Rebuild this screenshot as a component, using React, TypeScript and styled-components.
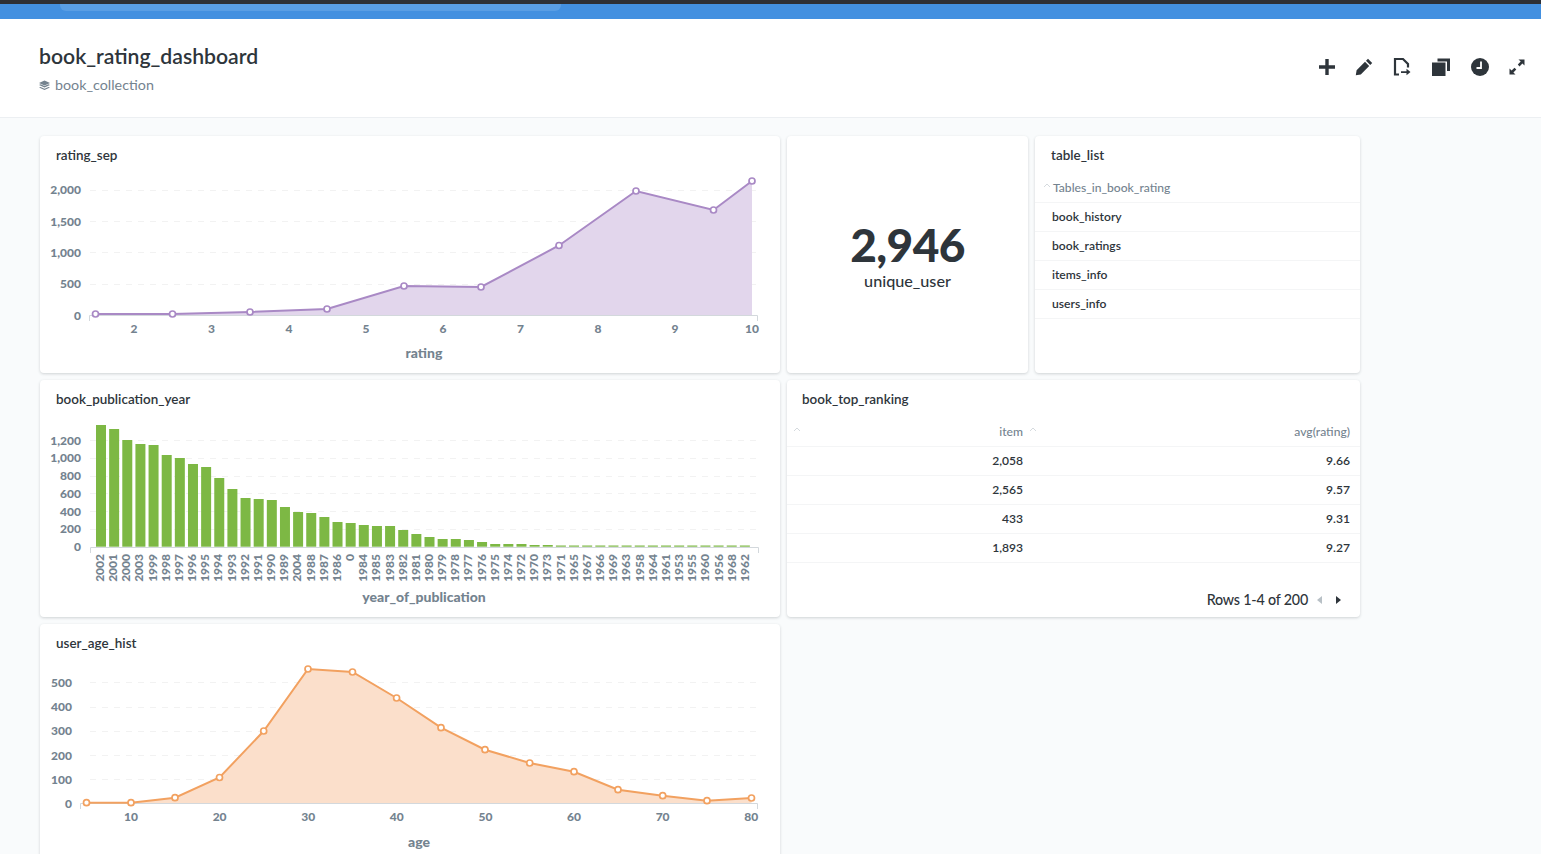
import React from 'react';
import styled, { createGlobalStyle } from 'styled-components';

const Global = createGlobalStyle`
  html, body { margin: 0; padding: 0; height: 100%; overflow: hidden; background: #f9fbfc; }
  body { font-family: Lato, "Noto Sans", sans-serif; color: #2e353b; }
`;

const Page = styled.div`
  width: 1541px;
  height: 854px;
  overflow: hidden;
  display: flex;
  flex-direction: column;
`;
const WindowEdge = styled.div`
  height: 4px;
  flex: none;
  background: #2e3035;
`;
const NavBar = styled.div`
  height: 15px;
  flex: none;
  background: #4390e0;
  padding-left: 60px;
`;
const NavSearch = styled.div`
  width: 501px;
  height: 7px;
  background: #5a9ee4;
  border-radius: 0 0 6px 6px;
`;
const Header = styled.header`
  height: 99px;
  flex: none;
  box-sizing: border-box;
  background: #fff;
  border-bottom: 1px solid #eceff2;
  padding: 23px 6px 0 39px;
  display: flex;
  justify-content: space-between;
  align-items: flex-start;
`;
const TitleBlock = styled.div`
  display: flex;
  flex-direction: column;
  gap: 5px;
`;
const Title = styled.h1`
  margin: 0;
  font-size: 21.2px;
  line-height: 28px;
  font-weight: 600;
  color: #2e353b;
`;
const Collection = styled.div`
  display: flex;
  align-items: center;
  gap: 5px;
  font-size: 14.3px;
  line-height: 20px;
  font-weight: 400;
  color: #74838f;
`;
const Actions = styled.div`
  display: flex;
  align-items: center;
  margin-top: 15px;
`;
const ActionSlot = styled.div<{ $w: number }>`
  width: ${p => p.$w}px;
  height: 20px;
  display: flex;
  justify-content: center;
  align-items: center;
`;
const Board = styled.main`
  flex: none;
  padding: 18px 0 0 40px;
  display: grid;
  grid-template-columns: 740px 241px 325px;
  grid-auto-rows: 237px;
  gap: 7px;
`;
const Card = styled.section<{ $span?: number }>`
  grid-column: span ${p => p.$span ?? 1};
  background: #fff;
  border-radius: 4px;
  box-shadow: 0 1px 3px rgba(46, 53, 59, 0.2);
  display: flex;
  flex-direction: column;
  overflow: hidden;
`;
const CardTitle = styled.h2`
  margin: 0;
  height: 38px;
  flex: none;
  box-sizing: border-box;
  padding: 11px 16px 0;
  font-size: 13.45px;
  line-height: 17px;
  font-weight: 600;
  color: #2e353b;
`;
const TableTitle = styled(CardTitle)`
  padding-left: 15px;
`;
const ChartSvg = styled.svg`
  display: block;
  flex: none;
  width: 740px;
  height: 199px;
  font-family: Lato, sans-serif;
`;
const TickText = styled.text`
  font-size: 12px;
  font-weight: 900;
  fill: #74838f;
`;
const AxisTitle = styled.text`
  font-size: 14px;
  font-weight: 900;
  fill: #74838f;
  text-anchor: middle;
`;
const MetricCard = styled(Card)`
  align-items: center;
  justify-content: center;
  padding-top: 1px;
  box-sizing: border-box;
`;
const MetricValue = styled.div`
  font-size: 46px;
  line-height: 52px;
  font-weight: 900;
  color: #2e353b;
  letter-spacing: -0.6px;
`;
const MetricLabel = styled.div`
  font-size: 16.2px;
  line-height: 20px;
  font-weight: 500;
  color: #2e353b;
`;
const Row = styled.div<{ $head?: boolean }>`
  height: 29px;
  box-sizing: border-box;
  flex: none;
  display: flex;
  align-items: center;
  border-bottom: 1px solid #f4f5f6;
  padding-bottom: ${p => (p.$head ? 2 : 1)}px;
  font-size: ${p => (p.$head ? 12.1 : 12.1)}px;
  font-weight: ${p => (p.$head ? 500 : 600)};
  color: ${p => (p.$head ? '#74838f' : '#2e353b')};
`;
const ListHead = styled(Row)`
  padding-left: 8px;
`;
const ListRow = styled(Row)`
  padding-left: 17px;
`;
const LeftCell = styled.div`
  width: 236px;
  flex: none;
  display: flex;
  justify-content: flex-end;
  align-items: center;
`;
const RightCell = styled.div`
  flex: 1;
  text-align: right;
  padding-right: 10px;
`;
const HeadLeft = styled.div`
  width: 236px;
  flex: none;
  display: flex;
  justify-content: space-between;
  align-items: center;
  padding-left: 6px;
  box-sizing: border-box;
`;
const ItemSort = styled.div`
  width: 8px;
  flex: none;
  margin-left: 6px;
  display: flex;
`;
const ChevronMark = styled.svg<{ $gap?: number }>`
  flex: none;
  margin-right: ${p => p.$gap ?? 0}px;
  margin-bottom: 3px;
`;
const Pager = styled.div`
  margin-top: 27px;
  display: flex;
  justify-content: flex-end;
  align-items: center;
  padding-right: 19px;
  font-size: 14.3px;
  line-height: 20px;
  font-weight: 500;
  color: #2e353b;
  letter-spacing: -0.2px;
`;
const PagerIcons = styled.div`
  display: flex;
  align-items: center;
  gap: 14px;
  margin-left: 9px;
`;

const Chevron = ({ gap = 0 }: { gap?: number }) => (
  <ChevronMark $gap={gap} width="8" height="5" viewBox="0 0 8 5">
    <path d="M1 4 L4 1 L7 4" fill="none" stroke="#d5dade" strokeWidth="1" />
  </ChevronMark>
);

const Grid = ({ ys }: { ys: number[] }) => (
  <g stroke="#f2f2f2" strokeWidth="1" strokeDasharray="6 6">
    {ys.map(y => (
      <line key={y} x1="90" x2="757" y1={y + 0.5} y2={y + 0.5} />
    ))}
  </g>
);

const ratingPts: [number, number][] = [
  [95.5, 314], [172.5, 314], [250, 312], [327, 309], [404, 286],
  [481, 287], [559, 245.5], [636, 191], [713.5, 210], [752, 181],
];
const agePts: [number, number][] = [
  [86.5, 802.7], [131, 802.7], [175, 797.7], [219.5, 777.5], [263.7, 731], [308, 669],
  [352.5, 672], [396.6, 698], [441, 727.7], [485, 749.7], [529.7, 763], [574, 771.7],
  [618, 789.7], [662.7, 795.7], [707, 800.7], [751.5, 798],
];

const AreaSeries = ({ pts, base, fill, stroke }: { pts: [number, number][]; base: number; fill: string; stroke: string }) => {
  const line = pts.map(p => p.join(',')).join(' ');
  const area = `${pts[0][0]},${base} ${line} ${pts[pts.length - 1][0]},${base}`;
  return (
    <g>
      <polygon points={area} fill={fill} />
      <polyline points={line} fill="none" stroke={stroke} strokeWidth="2" />
      {pts.map(p => (
        <circle key={p[0]} cx={p[0]} cy={p[1]} r="3" fill="#fff" stroke={stroke} strokeWidth="1.7" />
      ))}
    </g>
  );
};

const Axis = ({ y, x1, x2 }: { y: number; x1: number; x2: number }) => (
  <path d={`M${x1 + 0.5} ${y + 6} V${y + 0.5} H${x2 + 0.5} V${y + 6}`} fill="none" stroke="#d3d8dc" strokeWidth="1" />
);

const years = ['2002','2001','2000','2003','1999','1998','1997','1996','1995','1994','1993','1992','1991','1990','1989','2004','1988','1987','1986','0','1984','1985','1983','1982','1981','1980','1979','1978','1977','1976','1975','1974','1972','1970','1973','1971','1965','1967','1966','1969','1963','1958','1964','1961','1953','1955','1960','1956','1968','1962'];
const tops = [425,429,440,444,445,455,458,464,467,478,489,498,499,500,507,512,513,517,522,523,525,526,526,530,534,537,539,539,540,542,544,544,544,545,545,545.5];
const barTop = (i: number) => (i < tops.length ? tops[i] : 545.5);

const RatingChart = () => (
  <ChartSvg viewBox="40 174 740 199">
    <Grid ys={[190, 221, 252, 284]} />
    {[['2,000', 190], ['1,500', 222], ['1,000', 253], ['500', 284], ['0', 316]].map(([t, y]) => (
      <TickText key={t as string} x="81" y={(y as number) + 4} textAnchor="end">{t}</TickText>
    ))}
    <Axis y={315} x1={89} x2={757} />
    <AreaSeries pts={ratingPts} base={315} fill="#e2d6ec" stroke="#a989c5" />
    {[[2, 134], [3, 211.5], [4, 289], [5, 366], [6, 443], [7, 520.5], [8, 598], [9, 675], [10, 752]].map(([t, x]) => (
      <TickText key={t} x={x} y="332.5" textAnchor="middle">{t}</TickText>
    ))}
    <AxisTitle x="424" y="358">rating</AxisTitle>
  </ChartSvg>
);

const YearChart = () => (
  <ChartSvg viewBox="40 418 740 199">
    <Grid ys={[440, 458, 476, 493, 511, 529]} />
    {[['1,200', 441], ['1,000', 458], ['800', 476], ['600', 494], ['400', 512], ['200', 529], ['0', 547]].map(([t, y]) => (
      <TickText key={t as string} x="81" y={(y as number) + 4} textAnchor="end">{t}</TickText>
    ))}
    {years.map((_, i) => {
      const x = 96 + i * 13.14;
      return <rect key={i} x={x} y={barTop(i)} width="10" height={546.7 - barTop(i)} fill="#7db844" />;
    })}
    <Axis y={547} x1={90} x2={758} />
    {years.map((y, i) => {
      const x = 104 + i * 13.16;
      return (
        <TickText key={y} transform={`rotate(-90 ${x} 554)`} x={x} y="554" textAnchor="end">{y}</TickText>
      );
    })}
    <AxisTitle x="424" y="602">year_of_publication</AxisTitle>
  </ChartSvg>
);

const AgeChart = () => (
  <ChartSvg viewBox="40 662 740 199">
    <Grid ys={[682, 707, 731, 755, 779]} />
    {[['500', 683], ['400', 707], ['300', 731], ['200', 756], ['100', 780], ['0', 804]].map(([t, y]) => (
      <TickText key={t as string} x="72" y={(y as number) + 4} textAnchor="end">{t}</TickText>
    ))}
    <Axis y={803} x1={80} x2={757} />
    <AreaSeries pts={agePts} base={803} fill="#fbdfcb" stroke="#f2a160" />
    {[10, 20, 30, 40, 50, 60, 70, 80].map((t, i) => (
      <TickText key={t} x={131 + i * 88.6} y="821" textAnchor="middle">{t}</TickText>
    ))}
    <AxisTitle x="419" y="847">age</AxisTitle>
  </ChartSvg>
);

const dark = '#2e353b';
const PlusIcon = () => (
  <svg width="18" height="18" viewBox="0 0 18 18"><path d="M7.3 1h3.4v6.3H17v3.4h-6.3V17H7.3v-6.3H1V7.3h6.3z" fill={dark} /></svg>
);
const PencilIcon = () => (
  <svg width="18" height="18" viewBox="0 0 18 18"><path d="M13 .8l4.2 4.2-2 2L11 2.8zM10 3.8l4.2 4.2-8.4 8.4L.8 17.2l.8-5z" fill={dark} /></svg>
);
const DocIcon = () => (
  <svg width="20" height="20" viewBox="0 0 20 20">
    <path d="M7 17.5H3V2h8l5 5v3.5" fill="none" stroke={dark} strokeWidth="2.2" />
    <path d="M9 14.2h5.5v-2.4l4 3.2-4 3.2v-2.2H9z" fill={dark} />
  </svg>
);
const CopyIcon = () => (
  <svg width="20" height="20" viewBox="0 0 20 20">
    <path d="M6.5 1.5H19V14h-3V4.5H6.5z" fill={dark} />
    <rect x="1" y="5.5" width="13.5" height="13.5" fill={dark} />
  </svg>
);
const ClockIcon = () => (
  <svg width="20" height="20" viewBox="0 0 20 20">
    <circle cx="10" cy="10" r="9" fill={dark} />
    <path d="M11 4.5v6.5H6.5" fill="none" stroke="#fff" strokeWidth="1.8" />
  </svg>
);
const ExpandIcon = () => (
  <svg width="18" height="18" viewBox="0 0 18 18">
    <path d="M10.5 1.5H16.5V7.5L14.4 5.4 11.5 8.4 9.8 6.6 12.7 3.6zM7.5 16.5H1.5V10.5L3.6 12.6 6.5 9.7 8.3 11.4 5.4 14.4z" fill={dark} />
  </svg>
);
const LayersIcon = () => (
  <svg width="11" height="11" viewBox="0 0 11 11">
    <path d="M5.5 .5L11 3 5.5 5.5 0 3z" fill="#74838f" />
    <path d="M0 5l1.6-.7 3.9 1.8 3.9-1.8L11 5 5.5 7.5z" fill="#74838f" />
    <path d="M0 7.6l1.6-.7 3.9 1.8 3.9-1.8 1.6.7L5.5 10.1z" fill="#74838f" />
  </svg>
);

const ranking = [['2,058', '9.66'], ['2,565', '9.57'], ['433', '9.31'], ['1,893', '9.27']];
const tables = ['book_history', 'book_ratings', 'items_info', 'users_info'];

export default function App() {
  return (
    <Page>
      <Global />
      <WindowEdge />
      <NavBar><NavSearch /></NavBar>
      <Header>
        <TitleBlock>
          <Title>book_rating_dashboard</Title>
          <Collection><LayersIcon />book_collection</Collection>
        </TitleBlock>
        <Actions>
          <ActionSlot $w={37}><PlusIcon /></ActionSlot>
          <ActionSlot $w={37}><PencilIcon /></ActionSlot>
          <ActionSlot $w={39}><DocIcon /></ActionSlot>
          <ActionSlot $w={40}><CopyIcon /></ActionSlot>
          <ActionSlot $w={38}><ClockIcon /></ActionSlot>
          <ActionSlot $w={36}><ExpandIcon /></ActionSlot>
        </Actions>
      </Header>
      <Board>
        <Card>
          <CardTitle>rating_sep</CardTitle>
          <RatingChart />
        </Card>
        <MetricCard>
          <MetricValue>2,946</MetricValue>
          <MetricLabel>unique_user</MetricLabel>
        </MetricCard>
        <Card>
          <CardTitle>table_list</CardTitle>
          <ListHead $head><Chevron gap={2} />Tables_in_book_rating</ListHead>
          {tables.map(t => <ListRow key={t}>{t}</ListRow>)}
        </Card>
        <Card>
          <CardTitle>book_publication_year</CardTitle>
          <YearChart />
        </Card>
        <Card $span={2}>
          <TableTitle>book_top_ranking</TableTitle>
          <Row $head>
            <HeadLeft><Chevron />item</HeadLeft>
            <ItemSort><Chevron /></ItemSort>
            <RightCell>avg(rating)</RightCell>
          </Row>
          {ranking.map(([a, b]) => (
            <Row key={a}>
              <LeftCell>{a}</LeftCell>
              <RightCell>{b}</RightCell>
            </Row>
          ))}
          <Pager>
            Rows 1-4 of 200
            <PagerIcons>
              <svg width="5" height="8" viewBox="0 0 5 8"><path d="M5 0v8L0 4z" fill="#b8c0c6" /></svg>
              <svg width="5" height="8" viewBox="0 0 5 8"><path d="M0 0v8l5-4z" fill="#2e353b" /></svg>
            </PagerIcons>
          </Pager>
        </Card>
        <Card>
          <CardTitle>user_age_hist</CardTitle>
          <AgeChart />
        </Card>
      </Board>
    </Page>
  );
}
